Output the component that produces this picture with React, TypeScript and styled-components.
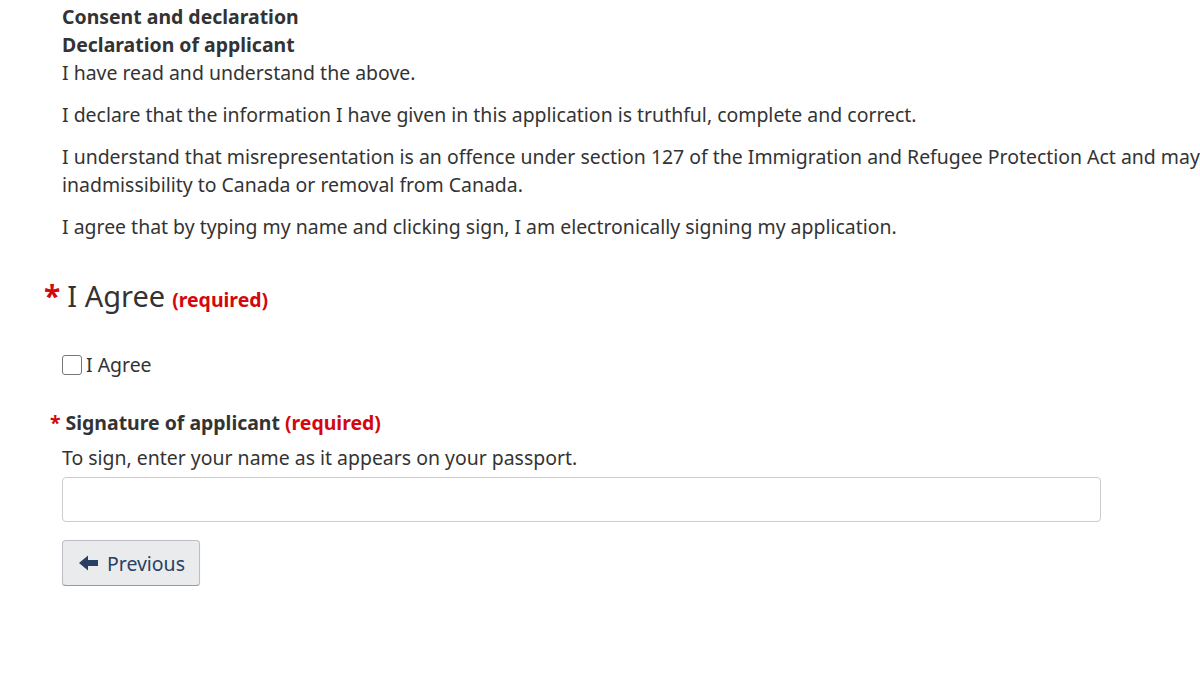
import React from "react";
import styled, { createGlobalStyle } from "styled-components";

const GlobalStyle = createGlobalStyle`
  html, body {
    margin: 0;
    padding: 0;
    background: #fff;
    overflow: hidden;
  }
  body {
    font-family: "Noto Sans", "DejaVu Sans", sans-serif;
    color: #333;
  }
`;

const Page = styled.main`
  width: 1142px;
  padding: 3px 0 0 62px;
  font-size: 19.45px;
  line-height: 28px;
`;

const Heading = styled.div`
  font-weight: 700;
`;

const Para = styled.p<{ $gap?: boolean }>`
  margin: ${(p) => (p.$gap ? "14px" : "0")} 0 0;
`;

const Fieldset = styled.fieldset`
  border: 0;
  margin: 35px 0 0;
  padding: 0;
  min-width: 0;
`;

const Legend = styled.legend`
  padding: 0;
  margin-left: -18px;
  font-size: 29px;
  line-height: 40px;
  display: flex;
  align-items: baseline;
`;

const Star = styled.span<{ $big?: boolean }>`
  color: #d3080c;
  font-weight: 700;
  font-size: ${(p) => (p.$big ? "30px" : "19.45px")};
  margin-right: ${(p) => (p.$big ? "7px" : "5px")};
`;

const Required = styled.strong<{ $tight?: boolean }>`
  color: #d3080c;
  font-size: 19.45px;
  font-weight: 700;
  margin-left: ${(p) => (p.$tight ? "5px" : "7px")};
`;

const CheckRow = styled.label`
  display: flex;
  align-items: center;
  margin-top: 31px;
  gap: 4px;
`;

const Box = styled.span`
  width: 18px;
  height: 18px;
  border: 1px solid #767676;
  border-radius: 3px;
  display: inline-block;
`;

const FieldLabel = styled.label`
  display: flex;
  align-items: baseline;
  margin: 30px 0 0 -12px;
  font-weight: 700;
`;

const Hint = styled.p`
  margin: 7px 0 0;
`;

const TextInput = styled.input`
  display: block;
  box-sizing: border-box;
  width: 1039px;
  height: 45px;
  margin-top: 5px;
  border: 1px solid #ccc;
  border-radius: 4px;
  font: inherit;
  outline: none;
`;

const Button = styled.button`
  margin-top: 18px;
  box-sizing: border-box;
  height: 46px;
  padding: 0 14px 0 16px;
  display: flex;
  align-items: center;
  gap: 8px;
  background: #eaebed;
  border: 1px solid #bbbfc5;
  border-bottom-color: #999;
  border-radius: 4px;
  box-shadow: 0 1px 1px rgba(0, 0, 0, 0.15);
  color: #284162;
  font-family: inherit;
  font-size: 19.45px;
`;

const ArrowLeft = () => (
  <svg width="20" height="16" viewBox="0 0 20 16" fill="#284162">
    <path d="M0 8 L9 0.5 V5 H19 V11 H9 V15.5 Z" />
  </svg>
);

const App: React.FC = () => {
  return (
    <>
      <GlobalStyle />
      <Page>
        <Heading>Consent and declaration</Heading>
        <Heading>Declaration of applicant</Heading>
        <Para>I have read and understand the above.</Para>
        <Para $gap>
          I declare that the information I have given in this application is
          truthful, complete and correct.
        </Para>
        <Para $gap>
          I understand that misrepresentation is an offence under section 127 of
          the Immigration and Refugee Protection Act and may
          <br />
          inadmissibility to Canada or removal from Canada.
        </Para>
        <Para $gap>
          I agree that by typing my name and clicking sign, I am electronically
          signing my application.
        </Para>

        <Fieldset>
          <Legend>
            <Star $big>*</Star>I Agree<Required>(required)</Required>
          </Legend>
          <CheckRow>
            <Box />I Agree
          </CheckRow>
        </Fieldset>

        <FieldLabel>
          <Star>*</Star>Signature of applicant
          <Required $tight>(required)</Required>
        </FieldLabel>
        <Hint>To sign, enter your name as it appears on your passport.</Hint>
        <TextInput type="text" />

        <Button type="button">
          <ArrowLeft />
          Previous
        </Button>
      </Page>
    </>
  );
};

export default App;
